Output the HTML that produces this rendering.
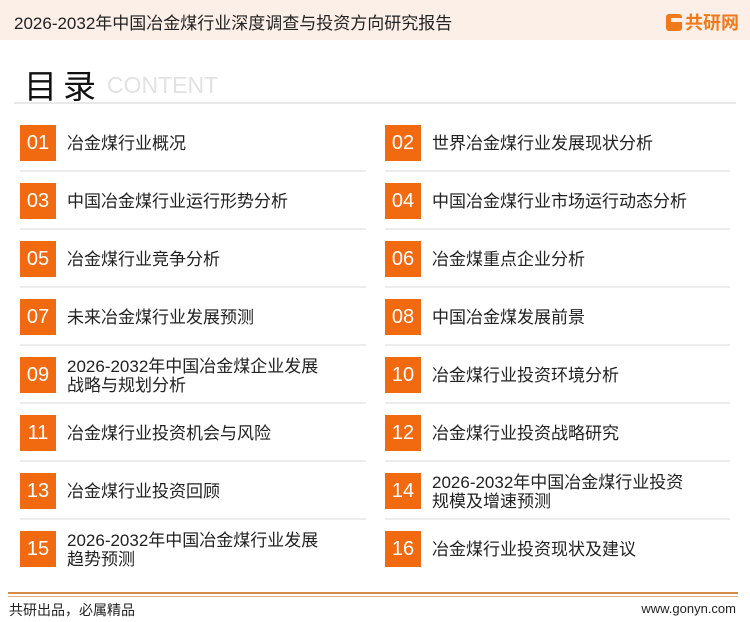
<!DOCTYPE html>
<html><head><meta charset="utf-8"><style>
*{margin:0;padding:0;box-sizing:border-box}
body{width:750px;height:622px;background:#fff;font-family:"Liberation Sans","Noto Sans CJK SC",sans-serif;position:relative;overflow:hidden;color:#222}
.hdr{position:absolute;left:0;top:0;width:750px;height:40px;background:#fcefe8}
.hdr .t{position:absolute;left:14px;top:9px;font-size:17px;color:#222}
.logo{position:absolute;left:666px;top:9px;font-size:18px;font-weight:bold;color:#f07a1a}
.logo i{display:inline-block;width:16px;height:17px;background:#f07a1a;border-radius:3px;vertical-align:-2px;margin-right:3px;position:relative}
.logo i:after{content:"";position:absolute;left:5px;top:4px;width:11px;height:4px;background:#fcefe8}
.h1{position:absolute;left:24px;top:60px;font-size:33px;color:#111;letter-spacing:6px}
.ct{position:absolute;left:107px;top:72px;font-size:23px;color:#e2e2e2}
.hl{position:absolute;left:14px;top:102px;width:722px;height:2px;background:#e8e8e8}
.it{position:absolute;height:36px}
.b{position:absolute;left:0;top:0;width:36px;height:36px;background:#f26a10;color:#fff;font-size:20px;text-align:center;line-height:36px}
.tx{position:absolute;left:47px;font-size:17px;line-height:19px;white-space:nowrap}
.ln{position:absolute;height:2px;background:#ececec}
.fl{position:absolute;left:8px;top:592px;width:730px;height:2px;background:#d88a4a}
.fl2{position:absolute;left:8px;top:596px;width:730px;height:1px;background:#e3b08a}
.ft{position:absolute;left:9px;top:600px;font-size:14px}
.fr{position:absolute;right:14px;top:601px;font-size:13px}
</style></head><body>
<div class="hdr"><div class="t">2026-2032年中国冶金煤行业深度调查与投资方向研究报告</div><div class="logo"><i></i>共研网</div></div>
<div class="h1">目录</div><div class="ct">CONTENT</div>
<div class="hl"></div>

<div class="it" style="left:20px;top:125px"><div class="b">01</div><div class="tx" style="top:9px">冶金煤行业概况</div></div>
<div class="it" style="left:385px;top:125px"><div class="b">02</div><div class="tx" style="top:9px">世界冶金煤行业发展现状分析</div></div>
<div class="it" style="left:20px;top:183px"><div class="b">03</div><div class="tx" style="top:9px">中国冶金煤行业运行形势分析</div></div>
<div class="it" style="left:385px;top:183px"><div class="b">04</div><div class="tx" style="top:9px">中国冶金煤行业市场运行动态分析</div></div>
<div class="it" style="left:20px;top:241px"><div class="b">05</div><div class="tx" style="top:9px">冶金煤行业竞争分析</div></div>
<div class="it" style="left:385px;top:241px"><div class="b">06</div><div class="tx" style="top:9px">冶金煤重点企业分析</div></div>
<div class="it" style="left:20px;top:299px"><div class="b">07</div><div class="tx" style="top:9px">未来冶金煤行业发展预测</div></div>
<div class="it" style="left:385px;top:299px"><div class="b">08</div><div class="tx" style="top:9px">中国冶金煤发展前景</div></div>
<div class="it" style="left:20px;top:357px"><div class="b">09</div><div class="tx" style="top:0">2026-2032年中国冶金煤企业发展<br>战略与规划分析</div></div>
<div class="it" style="left:385px;top:357px"><div class="b">10</div><div class="tx" style="top:9px">冶金煤行业投资环境分析</div></div>
<div class="it" style="left:20px;top:415px"><div class="b">11</div><div class="tx" style="top:9px">冶金煤行业投资机会与风险</div></div>
<div class="it" style="left:385px;top:415px"><div class="b">12</div><div class="tx" style="top:9px">冶金煤行业投资战略研究</div></div>
<div class="it" style="left:20px;top:473px"><div class="b">13</div><div class="tx" style="top:9px">冶金煤行业投资回顾</div></div>
<div class="it" style="left:385px;top:473px"><div class="b">14</div><div class="tx" style="top:0">2026-2032年中国冶金煤行业投资<br>规模及增速预测</div></div>
<div class="it" style="left:20px;top:531px"><div class="b">15</div><div class="tx" style="top:0">2026-2032年中国冶金煤行业发展<br>趋势预测</div></div>
<div class="it" style="left:385px;top:531px"><div class="b">16</div><div class="tx" style="top:9px">冶金煤行业投资现状及建议</div></div>

<div class="ln" style="left:20px;top:170px;width:346px"></div><div class="ln" style="left:385px;top:170px;width:345px"></div>
<div class="ln" style="left:20px;top:228px;width:346px"></div><div class="ln" style="left:385px;top:228px;width:345px"></div>
<div class="ln" style="left:20px;top:286px;width:346px"></div><div class="ln" style="left:385px;top:286px;width:345px"></div>
<div class="ln" style="left:20px;top:344px;width:346px"></div><div class="ln" style="left:385px;top:344px;width:345px"></div>
<div class="ln" style="left:20px;top:402px;width:346px"></div><div class="ln" style="left:385px;top:402px;width:345px"></div>
<div class="ln" style="left:20px;top:460px;width:346px"></div><div class="ln" style="left:385px;top:460px;width:345px"></div>
<div class="ln" style="left:20px;top:518px;width:346px"></div><div class="ln" style="left:385px;top:518px;width:345px"></div>

<div class="fl"></div><div class="fl2"></div>
<div class="ft">共研出品，必属精品</div><div class="fr">www.gonyn.com</div>
</body></html>
